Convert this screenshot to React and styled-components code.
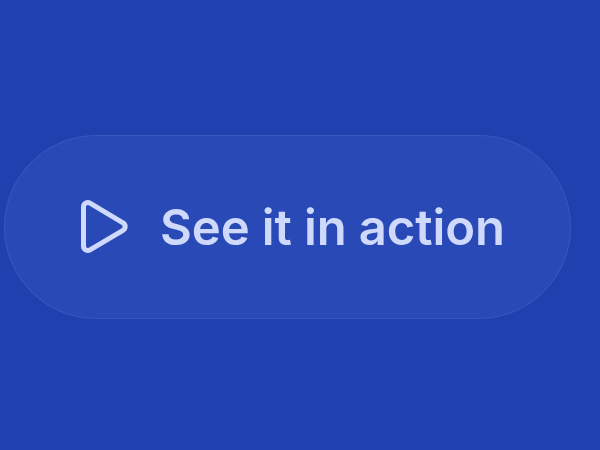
import React from 'react';
import styled, { createGlobalStyle } from 'styled-components';

const GlobalStyle = createGlobalStyle`
  html, body {
    margin: 0;
    height: 100%;
    background: #1f41b0;
  }
  #root {
    height: 100%;
  }
`;

const Page = styled.div`
  width: 600px;
  height: 450px;
  box-sizing: border-box;
  background: #1f41b0;
  padding: 135px 0 0 4px;
  overflow: hidden;
`;

const ActionButton = styled.button`
  display: flex;
  align-items: center;
  gap: 30px;
  width: 567px;
  height: 184px;
  box-sizing: border-box;
  padding: 0 0 0 75px;
  border: 1.5px solid rgba(255, 255, 255, 0.07);
  border-radius: 92px;
  background: rgba(150, 175, 255, 0.085);
  color: #cfd9fb;
  font-family: Inter, "Liberation Sans", sans-serif;
  font-size: 49px;
  font-weight: 600;
  letter-spacing: -0.1px;
`;

const PlayIcon = styled.svg`
  width: 50px;
  height: 58px;
  flex: none;
`;

export default function App() {
  return (
    <Page>
      <GlobalStyle />
      <ActionButton>
        <PlayIcon viewBox="0 0 50 58" fill="none">
          <path
            d="M3.5 9C3.5 5.5 7.1 3.5 10 5.2L43 24.8C45.9 26.5 45.9 30.6 43 32.3L10 51.8C7.1 53.5 3.5 51.5 3.5 48Z"
            stroke="currentColor"
            strokeWidth="5"
            strokeLinejoin="round"
          />
        </PlayIcon>
        See it in action
      </ActionButton>
    </Page>
  );
}
